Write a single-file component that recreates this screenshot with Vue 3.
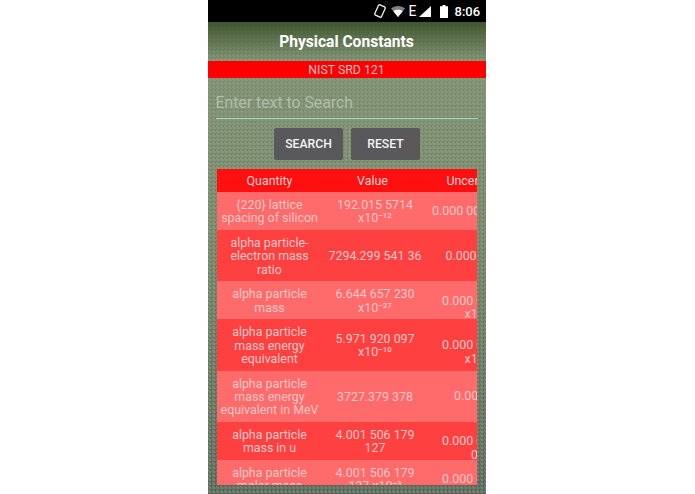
<script setup>
const rows = [
  { q: '{220} lattice spacing of silicon', v: '192.015 5714 x10⁻¹²', u: '0.000 0032 x10⁻¹²' },
  { q: 'alpha particle-electron mass ratio', v: '7294.299 541 36', u: '0.000 000 24' },
  { q: 'alpha particle mass', v: '6.644 657 230 x10⁻²⁷', u: '0.000 000 082 x10⁻²⁷' },
  { q: 'alpha particle mass energy equivalent', v: '5.971 920 097 x10⁻¹⁰', u: '0.000 000 073 x10⁻¹⁰' },
  { q: 'alpha particle mass energy equivalent in MeV', v: '3727.379 378', u: '0.000 023' },
  { q: 'alpha particle mass in u', v: '4.001 506 179 127', u: '0.000 000 000 063' },
  { q: 'alpha particle molar mass', v: '4.001 506 179 127 x10⁻³', u: '0.000 000 000 063 x10⁻³' }
]
</script>

<template>
  <div class="page">
    <div class="phone">
      <header class="status">
        <svg class="rotate" width="12" height="14" viewBox="0 0 12 14">
          <rect x="2.3" y="1.4" width="7.4" height="11.2" rx="1.2" transform="rotate(24 6 7)" fill="none" stroke="#f0f0f0" stroke-width="1.3" />
        </svg>
        <svg class="wifi" width="14" height="11" viewBox="0 0 14 11">
          <path d="M0 2.4C1.9.9 4.3 0 7 0s5.100.9 7 2.400L7 11Z" fill="#fff" opacity=".5" />
          <path d="M2.400 5.200C3.700 4.300 5.300 3.800 7 3.800s3.300.5 4.600 1.400L7 11Z" fill="#fff" />
        </svg>
        <span class="net">E</span>
        <svg class="signal" width="12" height="11" viewBox="0 0 12 11"><path d="M12 0V11H0Z" fill="#fff" /></svg>
        <svg class="battery" width="8" height="13" viewBox="0 0 8 13"><path d="M2.500 0h3v1.200H8V13H0V1.200h2.500Z" fill="#fff" /></svg>
        <span class="time">8:06</span>
      </header>
      <main class="screen">
        <h1 class="title">Physical Constants</h1>
        <div class="banner">NIST SRD 121</div>
        <div class="search">Enter text to Search</div>
        <div class="buttons">
          <button class="btn">SEARCH</button>
          <button class="btn">RESET</button>
        </div>
        <div class="table">
          <div class="inner">
            <div class="row head">
              <div class="cell">Quantity</div>
              <div class="cell">Value</div>
              <div class="cell">Uncertainty</div>
            </div>
            <div v-for="(r, i) in rows" :key="i" class="row" :class="i % 2 ? 'even' : 'odd'">
              <div class="cell">{{ r.q }}</div>
              <div class="cell">{{ r.v }}</div>
              <div class="cell unc">{{ r.u }}</div>
            </div>
          </div>
        </div>
      </main>
    </div>
  </div>
</template>

<style scoped>
.page {
  width: 695px;
  height: 494px;
  background: #fff;
  display: flex;
  justify-content: center;
  overflow: hidden;
  font-family: Roboto, "Liberation Sans", sans-serif;
}
.phone {
  width: 278px;
  margin-left: -2px;
  display: flex;
  flex-direction: column;
}
.status {
  height: 22px;
  flex: none;
  background: #000;
  color: #fff;
  display: flex;
  align-items: center;
  justify-content: flex-end;
  padding-right: 7px;
}
.rotate { margin-right: 5px; }
.wifi { margin-right: 4px; }
.net { font-size: 14px; width: 6px; margin-right: 4px; line-height: 1; }
.signal { margin-right: 9px; }
.battery { margin-right: 7px; }
.time { font-size: 13px; font-weight: 500; width: 24px; }
.screen {
  flex: 1;
  min-height: 0;
  display: flex;
  flex-direction: column;
  background-color: #7f8f73;
  background-image:
    linear-gradient(to bottom, rgba(45, 70, 30, 0.8), rgba(60, 80, 40, 0) 40px),
    radial-gradient(circle at 2px 2px, rgba(165, 185, 140, 0.4) 1.2px, transparent 1.7px),
    radial-gradient(circle at 0 0, rgba(165, 185, 140, 0.4) 1.2px, transparent 1.7px),
    linear-gradient(to bottom, #7f8f73, #728269 45%, #55635a);
  background-size: 100% 100%, 4px 4px, 4px 4px, 100% 100%;
}
.title {
  margin: 0;
  height: 39px;
  display: flex;
  align-items: center;
  justify-content: center;
  color: #fff;
  font-size: 15.6px;
  font-weight: 700;
}
.banner {
  height: 17px;
  background: #ff0000;
  color: #ffc4c4;
  font-size: 12.3px;
  display: flex;
  align-items: center;
  justify-content: center;
}
.search {
  margin: 10px 8px 0;
  height: 31px;
  box-sizing: border-box;
  border-bottom: 1px solid #a4d4cc;
  color: #b0bcaa;
  font-size: 15.8px;
  line-height: 30px;
}
.buttons {
  display: flex;
  justify-content: center;
  gap: 7.5px;
  margin: 9px 0 0 1px;
}
.btn {
  width: 69.5px;
  height: 32px;
  border: 0;
  border-radius: 2px;
  padding: 0;
  background: #59595b;
  color: #f4f4f4;
  font-family: inherit;
  font-size: 12.2px;
  font-weight: 500;
}
.table {
  width: 260px;
  height: 316px;
  margin: 9px 0 0 9px;
  overflow: hidden;
}
.inner { width: 319px; }
.row {
  display: grid;
  grid-template-columns: 106px 105px 108px;
  align-items: center;
  color: #ffc8c8;
  font-size: 12.4px;
  line-height: 13.45px;
  overflow: hidden;
}
.row > .cell {
  text-align: center;
  padding: 6px 3px 5px;
}
.row > .unc {
  height: 13.45px;
  padding: 0 3px;
}
.head { background: #ff1010; height: 23px; color: #ffd0d0; }
.row.head > .cell { padding-top: 5px; padding-bottom: 4.5px; }
.row.head > .cell:nth-child(2) { padding-right: 8px; }
.row.head > .cell:nth-child(3) { padding-right: 10px; }
.odd { background: #ff6a6a; }
.even { background: #ff4040; }
</style>
